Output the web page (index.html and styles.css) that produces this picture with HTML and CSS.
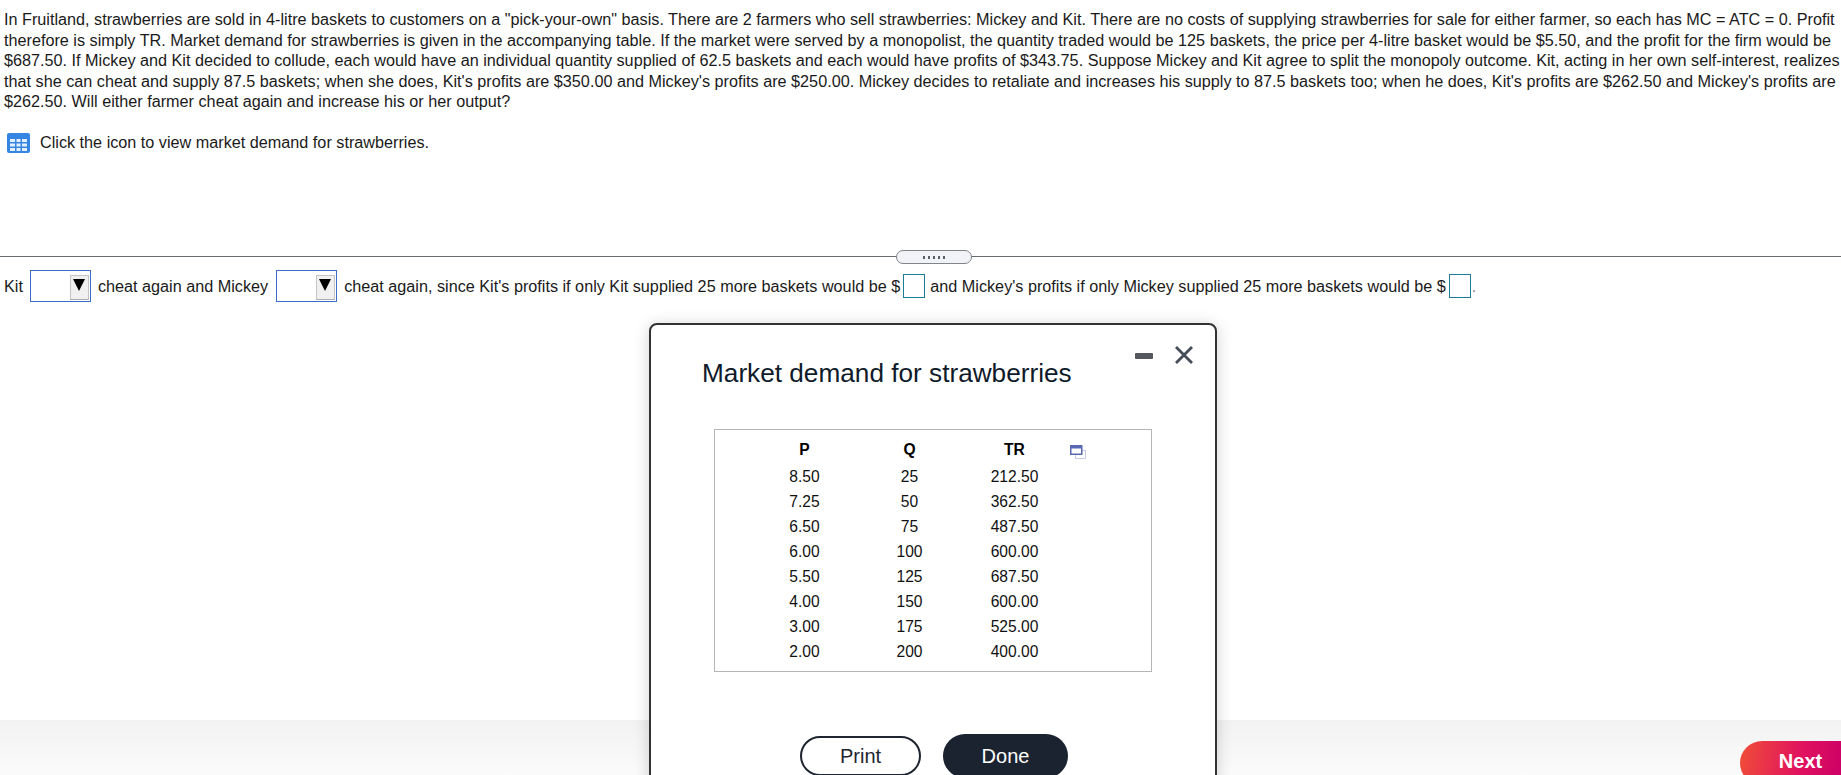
FILE: index.html
```html
<!DOCTYPE html>
<html lang="en">
<head>
    <meta charset="UTF-8">
    <title>Market demand for strawberries</title>
    <link rel="stylesheet" href="styles.css">
</head>
<body>
    <div class="page">
        <main class="content">
            <section class="question">
                <p class="question-text">In Fruitland, strawberries are sold in 4-litre baskets to customers on a "pick-your-own" basis. There are 2 farmers who sell strawberries: Mickey and Kit. There are no costs of supplying strawberries for sale for either farmer, so each has MC = ATC = 0. Profit<br>therefore is simply TR. Market demand for strawberries is given in the accompanying table. If the market were served by a monopolist, the quantity traded would be 125 baskets, the price per 4-litre basket would be $5.50, and the profit for the firm would be<br>$687.50. If Mickey and Kit decided to collude, each would have an individual quantity supplied of 62.5 baskets and each would have profits of $343.75. Suppose Mickey and Kit agree to split the monopoly outcome. Kit, acting in her own self-interest, realizes<br>that she can cheat and supply 87.5 baskets; when she does, Kit's profits are $350.00 and Mickey's profits are $250.00. Mickey decides to retaliate and increases his supply to 87.5 baskets too; when he does, Kit's profits are $262.50 and Mickey's profits are<br>$262.50. Will either farmer cheat again and increase his or her output?</p>
                <div class="table-link">
                    <svg class="grid-icon" width="23" height="20" viewBox="0 0 23 20">
                        <rect width="23" height="20" rx="2" fill="#3585e2"/>
                        <g fill="#e3effc">
                            <rect x="3" y="6" width="5" height="3"/><rect x="9.5" y="6" width="4" height="3"/><rect x="15" y="6" width="5" height="3"/>
                            <rect x="3" y="10.5" width="5" height="3"/><rect x="9.5" y="10.5" width="4" height="3"/><rect x="15" y="10.5" width="5" height="3"/>
                            <rect x="3" y="15" width="5" height="3"/><rect x="9.5" y="15" width="4" height="3"/><rect x="15" y="15" width="5" height="3"/>
                        </g>
                    </svg>
                    <span>Click the icon to view market demand for strawberries.</span>
                </div>
            </section>

            <div class="divider">
                <div class="grip"><span></span><span></span><span></span><span></span><span></span></div>
            </div>

            <section class="answer">
                <span>Kit</span>
                <div class="dropdown"><div class="dropdown-arrow"></div></div>
                <span>cheat again and Mickey</span>
                <div class="dropdown"><div class="dropdown-arrow"></div></div>
                <span>cheat again, since Kit's profits if only Kit supplied 25 more baskets would be $</span>
                <input class="answer-input" type="text">
                <span>and Mickey's profits if only Mickey supplied 25 more baskets would be $</span>
                <input class="answer-input last" type="text">
                <span class="stop">.</span>
            </section>
        </main>

        <footer class="footer">
            <button class="next-btn">Next</button>
        </footer>

        <div class="dialog">
            <div class="dialog-controls">
                <div class="minimize"></div>
                <svg width="18" height="18" viewBox="0 0 18 18">
                    <path d="M1 1L17 17M17 1L1 17" stroke="#434c57" stroke-width="2.8" fill="none"/>
                </svg>
            </div>
            <h2 class="dialog-title">Market demand for strawberries</h2>
            <div class="table-box">
                <table class="demand-table">
                    <thead>
                        <tr>
                            <th>P</th>
                            <th>Q</th>
                            <th>TR</th>
                            <th class="popout-cell">
                                <svg width="16" height="14" viewBox="0 0 16 14">
                                    <rect x="5.5" y="5.5" width="10" height="8" fill="none" stroke="#c5cae8"/>
                                    <rect x="0.75" y="0.75" width="11" height="8.5" fill="#fff" stroke="#5a68b4" stroke-width="1.5"/>
                                    <rect x="1" y="1" width="10.5" height="2.5" fill="#5a68b4"/>
                                </svg>
                            </th>
                        </tr>
                    </thead>
                    <tbody>
                        <tr><td>8.50</td><td>25</td><td>212.50</td><td></td></tr>
                        <tr><td>7.25</td><td>50</td><td>362.50</td><td></td></tr>
                        <tr><td>6.50</td><td>75</td><td>487.50</td><td></td></tr>
                        <tr><td>6.00</td><td>100</td><td>600.00</td><td></td></tr>
                        <tr><td>5.50</td><td>125</td><td>687.50</td><td></td></tr>
                        <tr><td>4.00</td><td>150</td><td>600.00</td><td></td></tr>
                        <tr><td>3.00</td><td>175</td><td>525.00</td><td></td></tr>
                        <tr><td>2.00</td><td>200</td><td>400.00</td><td></td></tr>
                    </tbody>
                </table>
            </div>
            <div class="dialog-buttons">
                <button class="print-btn">Print</button>
                <button class="done-btn">Done</button>
            </div>
        </div>
    </div>
</body>
</html>
```

FILE: styles.css
```css
html, body {
    margin: 0;
    padding: 0;
    height: 100%;
    overflow: hidden;
}

body {
    font-family: 'Liberation Sans', Arial, sans-serif;
    font-size: 16.22px;
    color: #1a1a1a;
    background: white;
}

.page {
    position: relative;
    height: 775px;
    display: flex;
    flex-direction: column;
    overflow: hidden;
}

.content {
    flex: 1;
}

.question {
    height: 256px;
    padding: 9px 0 0 4px;
    box-sizing: border-box;
}

.question-text {
    margin: 0;
    line-height: 20.5px;
    white-space: nowrap;
}

.table-link {
    display: flex;
    align-items: center;
    gap: 10px;
    margin: 21px 0 0 3px;
}

.divider {
    position: relative;
    border-top: 1px solid #666b70;
}

.grip {
    position: absolute;
    left: 896px;
    top: -7px;
    width: 74px;
    height: 12px;
    display: flex;
    justify-content: center;
    align-items: center;
    gap: 3px;
    background: #f1f3f6;
    border: 1px solid #80858c;
    border-radius: 7px;
}

.grip span {
    width: 2px;
    height: 3px;
    background: #5b6068;
}

.answer {
    display: flex;
    align-items: center;
    height: 32px;
    margin-top: 13px;
    padding-left: 4px;
    white-space: nowrap;
}

.dropdown {
    box-sizing: border-box;
    width: 61px;
    height: 32px;
    margin: 0 7px;
    padding: 4px 1px 1px 0;
    display: flex;
    justify-content: flex-end;
    border: 1px solid #3a6cc8;
}

.dropdown + span + .dropdown {
    margin-left: 8px;
}

.dropdown-arrow {
    position: relative;
    width: 19px;
    height: 25px;
    box-sizing: border-box;
    background: #f0f0f0;
    border: 1px solid #c4c4c4;
    border-bottom-color: #aaa;
}

.dropdown-arrow::after {
    content: "";
    position: absolute;
    left: 2px;
    top: 3px;
    border-left: 6px solid transparent;
    border-right: 6px solid transparent;
    border-top: 12px solid #000;
}

.answer-input {
    box-sizing: border-box;
    width: 22px;
    height: 24px;
    margin: 0 5px 0 3px;
    padding: 0;
    border: 1px solid #1f7a94;
    border-radius: 0;
    background: white;
}

.answer-input.last {
    margin-right: 1px;
}

.stop {
    color: #888;
}

.footer {
    height: 55px;
    display: flex;
    justify-content: flex-end;
    align-items: flex-start;
    background: linear-gradient(#f2f2f2, #fbfbfb);
}

.next-btn {
    width: 101px;
    height: 44px;
    margin-top: 21px;
    padding: 0 0 4px 20px;
    border: none;
    border-radius: 22px 0 0 22px;
    background: linear-gradient(100deg, #f04e37, #e0115f 60%, #cc0066);
    color: #fff;
    font-family: inherit;
    font-size: 20px;
    font-weight: bold;
}

/* floating dialog */
.dialog {
    position: absolute;
    left: 649px;
    top: 323px;
    width: 568px;
    height: 500px;
    box-sizing: border-box;
    padding: 0 51px;
    background: white;
    border: 2px solid #333;
    border-radius: 8px;
    box-shadow: 0 2px 16px rgba(0, 0, 0, 0.18);
}

.dialog-controls {
    position: absolute;
    top: 21px;
    right: 22px;
    display: flex;
    align-items: center;
    gap: 22px;
}

.minimize {
    width: 18px;
    height: 6px;
    margin-top: 2px;
    border-radius: 1px;
    background: #55585c;
}

.dialog-title {
    margin: 0;
    padding-top: 34px;
    font-size: 26.2px;
    font-weight: normal;
    line-height: 29px;
    color: #0f1a2a;
}

.table-box {
    box-sizing: border-box;
    width: 438px;
    height: 243px;
    margin: 41px 0 0 12px;
    padding: 7px 0 0 0;
    border: 1px solid #b5b5b5;
}

.demand-table {
    border-collapse: collapse;
    table-layout: fixed;
    width: 371px;
    margin-left: 37px;
    font-size: 15.6px;
    color: #111;
}

.demand-table th,
.demand-table td {
    padding: 0;
    width: 105px;
    text-align: center;
}

.demand-table td {
    height: 25px;
}

.demand-table th {
    height: 25px;
    padding-bottom: 2px;
    font-weight: bold;
    color: #000;
}

.demand-table .popout-cell {
    width: 56px;
    height: 22px;
    padding: 3px 0 0 3px;
    text-align: left;
    line-height: 0;
}

.dialog-buttons {
    display: flex;
    align-items: center;
    gap: 22px;
    margin: 62px 0 0 98px;
}

.print-btn,
.done-btn {
    box-sizing: border-box;
    font-family: inherit;
    font-size: 20px;
    border-radius: 22px;
}

.print-btn {
    width: 121px;
    height: 40px;
    background: white;
    border: 2px solid #1e2430;
    color: #1e2430;
}

.done-btn {
    width: 125px;
    height: 44px;
    background: #1c2330;
    border: none;
    color: white;
}
```
